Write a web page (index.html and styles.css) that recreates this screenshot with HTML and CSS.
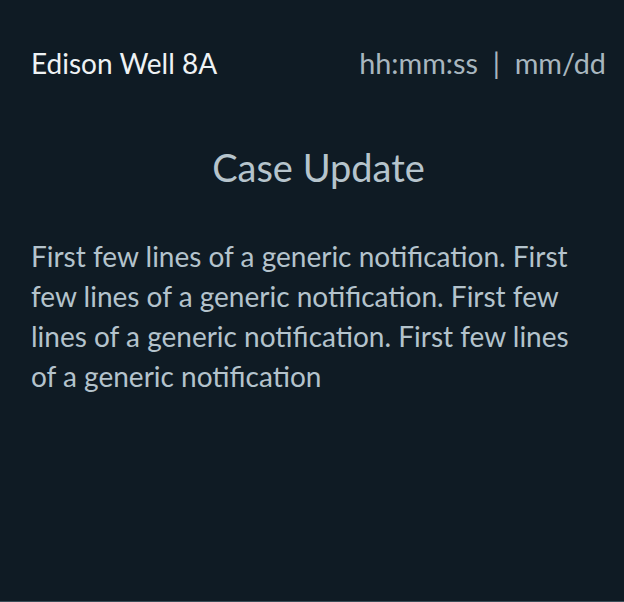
FILE: index.html
```html
<!DOCTYPE html>
<html>
<head>
<meta charset="utf-8">
<link rel="stylesheet" href="styles.css">
</head>
<body>
<div class="screen">
  <header class="top">
    <span class="site">Edison Well 8A</span>
    <span class="time">hh:mm:ss&nbsp;&nbsp;|&nbsp;&nbsp;mm/dd</span>
  </header>
  <main class="content">
    <h1 class="title">Case Update</h1>
    <p class="body">First few lines of a generic notification. First few lines of a generic notification. First few lines of a generic notification. First few lines of a generic notification</p>
  </main>
</div>
</body>
</html>
```
FILE: styles.css
```css
html, body {
  margin: 0;
  padding: 0;
  background: #0f1b24;
}
.screen {
  width: 624px;
  height: 602px;
  border-bottom: 1px solid #3b4d58;
  background: #0f1b24;
  font-family: Lato, "Open Sans", sans-serif;
  box-sizing: border-box;
}
.top {
  display: flex;
  justify-content: space-between;
  align-items: baseline;
  padding: 43px 18px 0 31px;
  line-height: 40px;
}
.site {
  color: #eef2f4;
  font-size: 28px;
}
.time {
  color: #a8b6bf;
  font-size: 28.8px;
}
.content {
  padding: 0 18px 0 31px;
}
.title {
  margin: 62px 0 0;
  text-align: center;
  font-weight: normal;
  color: #b6c4cc;
  font-size: 38px;
  line-height: 44px;
}
.body {
  margin: 47px 13px 0 0;
  color: #b4c3cc;
  font-size: 28px;
  line-height: 40px;
}
```
